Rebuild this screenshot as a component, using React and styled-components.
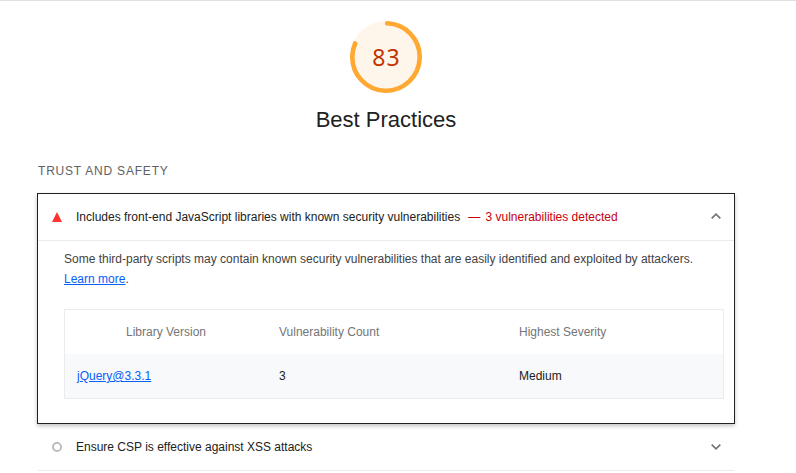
import React from "react";
import styled, { createGlobalStyle } from "styled-components";

const GlobalStyle = createGlobalStyle`
  * { box-sizing: border-box; }
  body {
    margin: 0;
    background: #fff;
    color: #212121;
    font-family: "Liberation Sans", Arial, sans-serif;
    font-size: 12px;
    line-height: 20px;
    overflow: hidden;
  }
`;

const Page = styled.main`
  height: 473px;
  border-top: 1px solid #e0e0e0;
  padding: 20px 61px 0 37px;
  overflow: hidden;
`;

const Summary = styled.header`
  display: flex;
  flex-direction: column;
  align-items: center;
`;

const Gauge = styled.div`
  display: grid;
  place-items: center;
  width: 72px;
  height: 72px;
  > * { grid-area: 1 / 1; }
`;

const Score = styled.span`
  font-family: "Noto Sans", sans-serif;
  font-size: 23px;
  line-height: 30px;
  letter-spacing: 1px;
  padding-left: 1px;
  color: #c33300;
`;

const Title = styled.h1`
  margin: 11px 0 0;
  font-size: 22px;
  font-weight: 400;
  line-height: 32px;
`;

const GroupTitle = styled.h2`
  margin: 25px 0 12px 1px;
  font-size: 12px;
  font-weight: 400;
  line-height: 20px;
  letter-spacing: 0.8px;
  color: #616161;
`;

const Card = styled.section`
  height: 231px;
  border: 1px solid #212121;
  box-shadow: 0 2px 4px rgba(0, 0, 0, 0.24);
`;

const AuditRow = styled.div`
  display: flex;
  align-items: center;
  height: 47px;
  margin: ${(p) => (p.$outside ? "0 1px" : "0")};
  padding: 0 13px 0 14px;
  border-bottom: 1px solid #ebebeb;
`;

const AuditTitle = styled.span`
  margin-left: 14px;
  flex: 1;
  white-space: pre;
`;

const Failure = styled.span`
  margin-left: 8px;
  color: #c7000a;
`;

const Dash = styled.span`
  margin-right: 2px;
`;

const Details = styled.div`
  padding: 8px 10px 0 26px;
`;

const Description = styled.p`
  margin: 0 0 20px;
  color: #424242;
  white-space: nowrap;
`;

const Link = styled.a`
  color: #0660f9;
  text-decoration: underline;
`;

const Table = styled.div`
  border: 1px solid #ebebeb;
`;

const TableRow = styled.div`
  display: grid;
  grid-template-columns: 202px 240px 1fr;
  align-items: center;
  height: 44px;
  background: ${(p) => (p.$head ? "#fff" : "#f8f9fb")};
  color: ${(p) => (p.$head ? "#757575" : "#212121")};
`;

const Cell = styled.span`
  padding: ${(p) => (p.$center ? "0" : "0 0 0 12px")};
  text-align: ${(p) => (p.$center ? "center" : "left")};
`;

const Svg = styled.svg`
  display: block;
  flex: none;
`;

const ScoreRing = () => (
  <Svg width="72" height="72" viewBox="0 0 72 72" fill="none">
    <circle cx="36" cy="36" r="36" fill="#fff6eb" />
    <circle
      cx="36" cy="36" r="33.7" stroke="#ffa932" strokeWidth="4.6"
      strokeLinecap="round" pathLength="100" strokeDasharray="81 100"
      transform="rotate(-88 36 36)"
    />
  </Svg>
);

const Chevron = ({ up }) => (
  <Svg width="10" height="10" viewBox="0 0 10 10" fill="none">
    <path d={up ? "M.7 6.4 5 2.1l4.3 4.3" : "M.7 2.6 5 6.8 9.3 2.6"} stroke="#757575" strokeWidth="1.7" />
  </Svg>
);

const FailIcon = () => (
  <Svg width="10" height="10" viewBox="0 0 10 10">
    <path d="M5 0 10 10H0Z" fill="#ff3333" />
  </Svg>
);

const InfoIcon = () => (
  <Svg width="10" height="10" viewBox="0 0 10 10">
    <circle cx="5" cy="5" r="4.1" fill="none" stroke="#b8b8b8" strokeWidth="1.8" />
  </Svg>
);

export default function App() {
  return (
    <>
      <GlobalStyle />
      <Page>
        <Summary>
          <Gauge>
            <ScoreRing />
            <Score>83</Score>
          </Gauge>
          <Title>Best Practices</Title>
        </Summary>
        <GroupTitle>TRUST AND SAFETY</GroupTitle>
        <Card>
          <AuditRow>
            <FailIcon />
            <AuditTitle>
              Includes front-end JavaScript libraries with known security vulnerabilities
              <Failure><Dash>—</Dash> 3 vulnerabilities detected</Failure>
            </AuditTitle>
            <Chevron up />
          </AuditRow>
          <Details>
            <Description>
              Some third-party scripts may contain known security vulnerabilities that are easily identified and exploited by attackers.
              <br />
              <Link>Learn more</Link>.
            </Description>
            <Table>
              <TableRow $head>
                <Cell $center>Library Version</Cell>
                <Cell>Vulnerability Count</Cell>
                <Cell>Highest Severity</Cell>
              </TableRow>
              <TableRow>
                <Cell><Link>jQuery@3.3.1</Link></Cell>
                <Cell>3</Cell>
                <Cell>Medium</Cell>
              </TableRow>
            </Table>
          </Details>
        </Card>
        <AuditRow $outside>
          <InfoIcon />
          <AuditTitle>Ensure CSP is effective against XSS attacks</AuditTitle>
          <Chevron />
        </AuditRow>
      </Page>
    </>
  );
}
